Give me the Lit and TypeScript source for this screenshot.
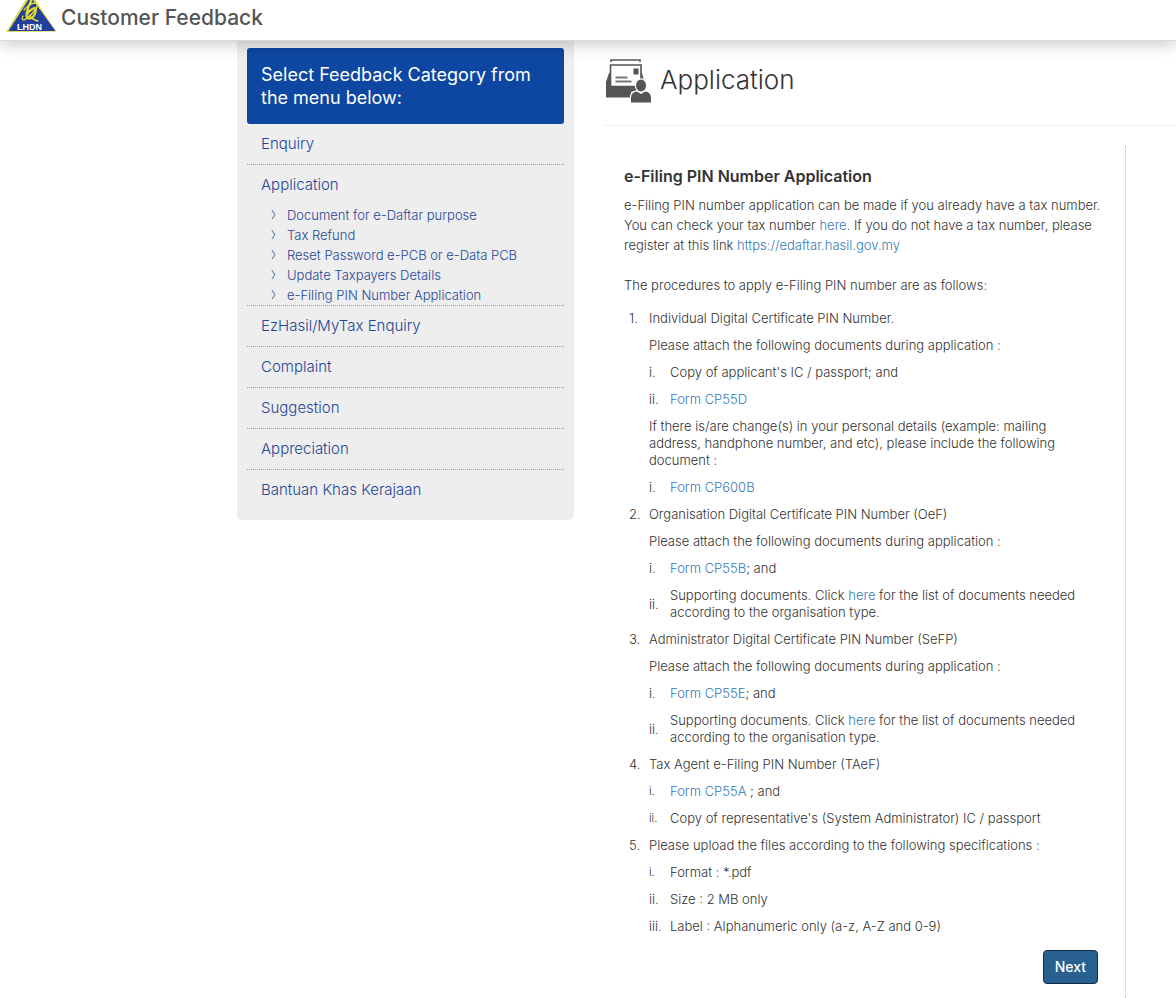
import { LitElement, html, css, TemplateResult } from "lit";
import { customElement } from "lit/decorators.js";

type Row = { mark?: string; small?: boolean; text: string | TemplateResult };
type Step = { title: string; rows: Row[] };

const link = (label: string) => html`<a href="#">${label}</a>`;
const attach = "Please attach the following documents during application :";
const supporting = html`Supporting documents. Click ${link("here")} for the list of documents needed
according to the organisation type.`;

const steps: Step[] = [
  {
    title: "Individual Digital Certificate PIN Number.",
    rows: [
      { text: attach },
      { mark: "i.", text: "Copy of applicant's IC / passport; and" },
      { mark: "ii.", text: link("Form CP55D") },
      {
        text: "If there is/are change(s) in your personal details (example: mailing address, handphone number, and etc), please include the following document :",
      },
      { mark: "i.", text: link("Form CP600B") },
    ],
  },
  {
    title: "Organisation Digital Certificate PIN Number (OeF)",
    rows: [
      { text: attach },
      { mark: "i.", text: html`${link("Form CP55B")}; and` },
      { mark: "ii.", text: supporting },
    ],
  },
  {
    title: "Administrator Digital Certificate PIN Number (SeFP)",
    rows: [
      { text: attach },
      { mark: "i.", text: html`${link("Form CP55E")}; and` },
      { mark: "ii.", text: supporting },
    ],
  },
  {
    title: "Tax Agent e-Filing PIN Number (TAeF)",
    rows: [
      { mark: "i.", small: true, text: html`${link("Form CP55A")} ; and` },
      { mark: "ii.", small: true, text: "Copy of representative's (System Administrator) IC / passport" },
    ],
  },
  {
    title: "Please upload the files according to the following specifications :",
    rows: [
      { mark: "i.", small: true, text: "Format : *.pdf" },
      { mark: "ii.", text: "Size : 2 MB only" },
      { mark: "iii.", text: "Label : Alphanumeric only (a-z, A-Z and 0-9)" },
    ],
  },
];

const categories: { label: string; children?: string[] }[] = [
  { label: "Enquiry" },
  {
    label: "Application",
    children: [
      "Document for e-Daftar purpose",
      "Tax Refund",
      "Reset Password e-PCB or e-Data PCB",
      "Update Taxpayers Details",
      "e-Filing PIN Number Application",
    ],
  },
  { label: "EzHasil/MyTax Enquiry" },
  { label: "Complaint" },
  { label: "Suggestion" },
  { label: "Appreciation" },
  { label: "Bantuan Khas Kerajaan" },
];

@customElement("feedback-menu")
export class FeedbackMenu extends LitElement {
  static styles = css`
    :host {
      display: block;
      padding: 7px 10px 10px;
      background: #eeeeee;
      border-radius: 0 0 5px 5px;
    }
    .title {
      margin: 0;
      padding: 15px 14px;
      border-radius: 3px;
      background: #0d47a1;
      color: #fff;
      font-size: 18px;
      font-weight: 400;
      line-height: 23px;
    }
    ul {
      list-style: none;
      margin: 0;
      padding: 0;
    }
    .item + .item {
      border-top: 1px dotted #999;
    }
    a {
      color: #1f4697;
      text-decoration: none;
    }
    .category {
      display: block;
      padding: 0 14px;
      font-size: 15px;
      line-height: 40px;
    }
    .sub a {
      display: grid;
      grid-template-columns: 16px 1fr;
      padding-left: 24px;
      font-size: 13px;
      line-height: 20px;
    }
    .arrow {
      font-family: "Noto Sans CJK SC", sans-serif;
      font-size: 10px;
      font-weight: 400;
    }
  `;
  render() {
    return html`
      <h2 class="title">Select Feedback Category from the menu below:</h2>
      <ul>
        ${categories.map(
          (c) => html`<li class="item">
            <a class="category" href="#">${c.label}</a>
            ${c.children
              ? html`<ul class="sub">
                  ${c.children.map(
                    (s) => html`<li><a href="#"><span class="arrow">〉</span><span>${s}</span></a></li>`
                  )}
                </ul>`
              : ""}
          </li>`
        )}
      </ul>
    `;
  }
}

@customElement("app-root")
export class AppRoot extends LitElement {
  static styles = css`
    :host {
      display: block;
      background: #fff;
      color: #333;
      font-family: Inter, "Liberation Sans", sans-serif;
      font-size: 13px;
      font-weight: 300;
      line-height: 17px;
    }
    a {
      color: #337ab7;
      text-decoration: none;
    }
    .bar {
      position: relative;
      z-index: 1;
      display: flex;
      align-items: flex-start;
      gap: 5px;
      height: 40px;
      padding-left: 6px;
      border-bottom: 1px solid #d8d8d8;
      background: #fff;
      box-shadow: 0 4px 16px rgba(0, 0, 0, 0.2);
    }
    .brand {
      color: #555;
      font-size: 21px;
      font-weight: 500;
      line-height: 36px;
    }
    .layout {
      display: grid;
      grid-template-columns: 237fr 337fr 31fr 571fr;
      align-items: start;
    }
    feedback-menu {
      grid-column: 2;
    }
    main {
      grid-column: 4;
    }
    .heading {
      display: flex;
      align-items: flex-start;
      gap: 8px;
      padding: 18px 0 20px;
      border-bottom: 1px solid #eee;
    }
    .heading h1 {
      margin: 0;
      font-size: 26px;
      font-weight: 300;
      line-height: 42px;
    }
    .panel {
      margin: 20px 50px 0 0;
      padding: 20px 20px 14px 19px;
      border-right: 1px dotted #bbb;
    }
    h2 {
      margin: 0 0 9px;
      font-size: 16px;
      font-weight: 600;
      line-height: 20px;
    }
    p {
      margin: 0 0 20px;
      line-height: 20px;
    }
    .lead {
      margin-bottom: 10px;
    }
    ol {
      list-style: none;
      margin: 0;
      padding: 0;
    }
    .step,
    .row {
      display: grid;
    }
    .step {
      grid-template-columns: 20px 1fr;
      padding-left: 5px;
    }
    .row {
      grid-template-columns: 21px 1fr;
      align-items: center;
    }
    .cell {
      padding: 5px 24px 5px 0;
    }
    .mark {
      white-space: nowrap;
    }
    .step > .mark {
      padding: 5px 0;
    }
    .wide {
      grid-column: 1 / -1;
    }
    .small {
      font-size: 11px;
    }
    .actions {
      display: flex;
      justify-content: flex-end;
      padding: 10px 7px 0 0;
    }
    button {
      padding: 6px 11px;
      border: 1px solid #122b40;
      border-radius: 4px;
      background: #286090;
      color: #fff;
      font: inherit;
      font-size: 14px;
      font-weight: 500;
      line-height: 20px;
    }
    svg {
      display: block;
      flex: none;
    }
    .logo-text {
      font: 700 9px "Liberation Sans", sans-serif;
    }
  `;

  private logo() {
    return html`<svg width="50" height="32" viewBox="0 0 50 32" role="img" aria-label="LHDN">
      <path d="M0 32 22-4h5l23 35.500z" fill="#ded94a" />
      <path d="M2.500 31 23.500-2h2L49.500 31z" fill="#213f9b" />
      <g fill="none" stroke="#e6df32" stroke-linecap="round">
        <path d="M26-1Q22 6 20.500 14 20 19 24 18.500T29.500 12 26.500 9 21 14" stroke-width="2.200" />
        <path d="M18 10Q24 3 29 3T29 10Q24 17 18 20 15 20 17 16M23 15Q27 20 32 21" stroke-width="1.300" />
      </g>
      <text class="logo-text" x="11" y="30" fill="#fff">LHDN</text>
    </svg>`;
  }

  private tray() {
    return html`<svg width="47" height="46" viewBox="0 0 47 46" aria-hidden="true">
      <path d="M6 3V1h29v2" fill="none" stroke="#555553" stroke-width="1.600" />
      <path d="M4 14 1 23V38.500H26V33L39 30V22L37 14z" fill="#555553" />
      <path d="M5.500 6h30.500v21.500H5.500z" fill="#fff" stroke="#555553" stroke-width="1.600" />
      <path d="M28.500 9.500h5v6h-5z" fill="#555553" />
      <path d="M10.500 18.500h12M10.500 22.500h16" stroke="#777" stroke-width="1.800" />
      <g fill="#555553" stroke="#fff" stroke-width="2.400" paint-order="stroke">
        <path d="M26 43.500V39Q26 33 32 32.500L36 35 40 32.500Q46 33 46 39V43.500z" />
        <ellipse cx="36" cy="26.500" rx="5" ry="6" />
      </g>
    </svg>`;
  }

  private row(r: Row) {
    return r.mark
      ? html`<li class="row">
          <span class="mark ${r.small ? "small" : ""}">${r.mark}</span>
          <span class="cell">${r.text}</span>
        </li>`
      : html`<li class="row"><span class="cell wide">${r.text}</span></li>`;
  }

  render() {
    return html`
      <header class="bar">
        ${this.logo()}
        <span class="brand">Customer Feedback</span>
      </header>
      <div class="layout">
        <feedback-menu></feedback-menu>
        <main>
          <div class="heading">
            ${this.tray()}
            <h1>Application</h1>
          </div>
          <section class="panel">
            <h2>e-Filing PIN Number Application</h2>
            <p>
              e-Filing PIN number application can be made if you already have a tax number. You can
              check your tax number ${link("here")}. If you do not have a tax number, please
              register at this link ${link("https://edaftar.hasil.gov.my")}
            </p>
            <p class="lead">The procedures to apply e-Filing PIN number are as follows:</p>
            <ol>
              ${steps.map(
                (s, i) => html`<li class="step">
                  <span class="mark">${i + 1}.</span>
                  <div>
                    <div class="cell">${s.title}</div>
                    <ol>
                      ${s.rows.map((r) => this.row(r))}
                    </ol>
                  </div>
                </li>`
              )}
            </ol>
            <div class="actions"><button type="button">Next</button></div>
          </section>
        </main>
      </div>
    `;
  }
}
